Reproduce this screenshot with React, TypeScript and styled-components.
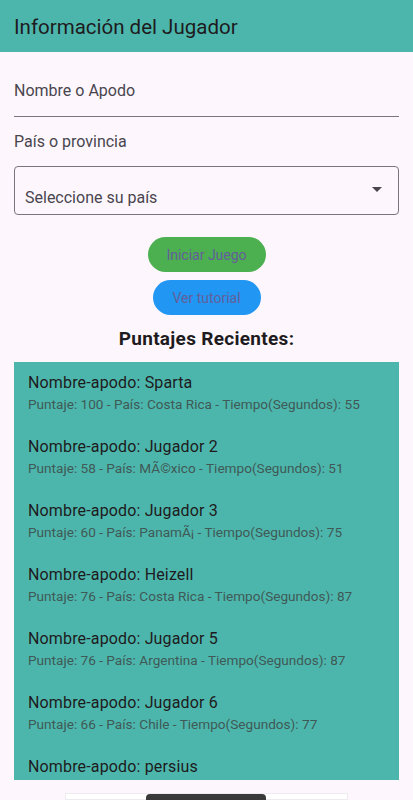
import React from 'react';
import styled, { createGlobalStyle } from 'styled-components';

const GlobalStyle = createGlobalStyle`
  html, body {
    margin: 0;
    padding: 0;
    background: #fdf7fd;
    font-family: Roboto, "Noto Sans", sans-serif;
    overflow: hidden;
  }
`;

const Screen = styled.div`
  width: 413px;
  height: 800px;
  display: flex;
  flex-direction: column;
  background: #fdf7fd;
  color: #1d1b20;
`;

const AppBar = styled.header`
  height: 52px;
  flex-shrink: 0;
  background: #4db6ac;
  display: flex;
  align-items: center;
  padding: 2px 14px 0;
  box-sizing: border-box;
  font-size: 20.5px;
  color: #1d1b20;
`;

const Body = styled.main`
  display: flex;
  flex-direction: column;
  padding: 0 14px;
`;

const TextField = styled.div`
  height: 65px;
  display: flex;
  align-items: flex-end;
  padding-bottom: 14px;
  border-bottom: 1px solid #79747e;
  font-size: 16px;
  line-height: 22px;
  color: #49454f;
  box-sizing: border-box;
`;

const FieldLabel = styled.div`
  height: 49px;
  display: flex;
  align-items: center;
  font-size: 16px;
  color: #49454f;
`;

const Select = styled.div`
  height: 49px;
  box-sizing: border-box;
  border: 1px solid #79747e;
  border-radius: 4px;
  display: flex;
  align-items: center;
  justify-content: space-between;
  padding: 14px 10px 0 10px;
  font-size: 16px;
  color: #49454f;
`;

const Arrow = styled.span`
  width: 0;
  height: 0;
  margin-bottom: 16px;
  margin-right: 6px;
  border-left: 5px solid transparent;
  border-right: 5px solid transparent;
  border-top: 5px solid #49454f;
`;

const Actions = styled.div`
  display: flex;
  flex-direction: column;
  align-items: center;
  gap: 8px;
  margin-top: 22px;
`;

const Pill = styled.button<{ $bg: string; $w: number }>`
  width: ${p => p.$w}px;
  height: 35px;
  border: none;
  border-radius: 18px;
  background: ${p => p.$bg};
  color: #63609a;
  font-family: Roboto, "Noto Sans", sans-serif;
  font-size: 14px;
  padding: 0;
`;

const SectionTitle = styled.h2`
  margin: 11px 0 0;
  height: 25px;
  text-align: center;
  font-size: 19px;
  font-weight: 700;
  line-height: 25px;
  letter-spacing: 0.3px;
  color: #1d1b20;
`;

const ScoreList = styled.ul`
  list-style: none;
  margin: 11px 0 0;
  padding: 0;
  height: 418px;
  overflow: hidden;
  background: #4db6ac;
`;

const ScoreItem = styled.li`
  height: 64px;
  box-sizing: border-box;
  padding: 10px 14px 12px;
`;

const ScoreName = styled.div`
  font-size: 16px;
  line-height: 22px;
  letter-spacing: 0.15px;
  color: #1d1b20;
`;

const ScoreInfo = styled.div`
  font-size: 13.6px;
  line-height: 20px;
  color: #3f5956;
`;

const AdSlot = styled.div`
  position: relative;
  margin: 13px auto 0;
  width: 283px;
  height: 40px;
  background: #ffffff;
  border: 1px solid #ecebee;
  box-sizing: border-box;
`;

const AdTag = styled.div`
  position: absolute;
  top: 0;
  left: 80px;
  width: 120px;
  height: 24px;
  border-radius: 4px;
  background: #3a3a3a;
`;

const scores = [
  { name: 'Sparta', score: 100, country: 'Costa Rica', time: 55 },
  { name: 'Jugador 2', score: 58, country: 'MÃ©xico', time: 51 },
  { name: 'Jugador 3', score: 60, country: 'PanamÃ¡', time: 75 },
  { name: 'Heizell', score: 76, country: 'Costa Rica', time: 87 },
  { name: 'Jugador 5', score: 76, country: 'Argentina', time: 87 },
  { name: 'Jugador 6', score: 66, country: 'Chile', time: 77 },
  { name: 'persius', score: 90, country: 'Costa Rica', time: 60 },
];

const App: React.FC = () => {
  return (
    <Screen>
      <GlobalStyle />
      <AppBar>Información del Jugador</AppBar>
      <Body>
        <TextField>Nombre o Apodo</TextField>
        <FieldLabel>País o provincia</FieldLabel>
        <Select>
          <span>Seleccione su país</span>
          <Arrow />
        </Select>
        <Actions>
          <Pill $bg="#4caf50" $w={118}>Iniciar Juego</Pill>
          <Pill $bg="#2196f3" $w={108}>Ver tutorial</Pill>
        </Actions>
        <SectionTitle>Puntajes Recientes:</SectionTitle>
        <ScoreList>
          {scores.map(s => (
            <ScoreItem key={s.name}>
              <ScoreName>Nombre-apodo: {s.name}</ScoreName>
              <ScoreInfo>
                Puntaje: {s.score} - País: {s.country} - Tiempo(Segundos): {s.time}
              </ScoreInfo>
            </ScoreItem>
          ))}
        </ScoreList>
      </Body>
      <AdSlot>
        <AdTag />
      </AdSlot>
    </Screen>
  );
};

export default App;
